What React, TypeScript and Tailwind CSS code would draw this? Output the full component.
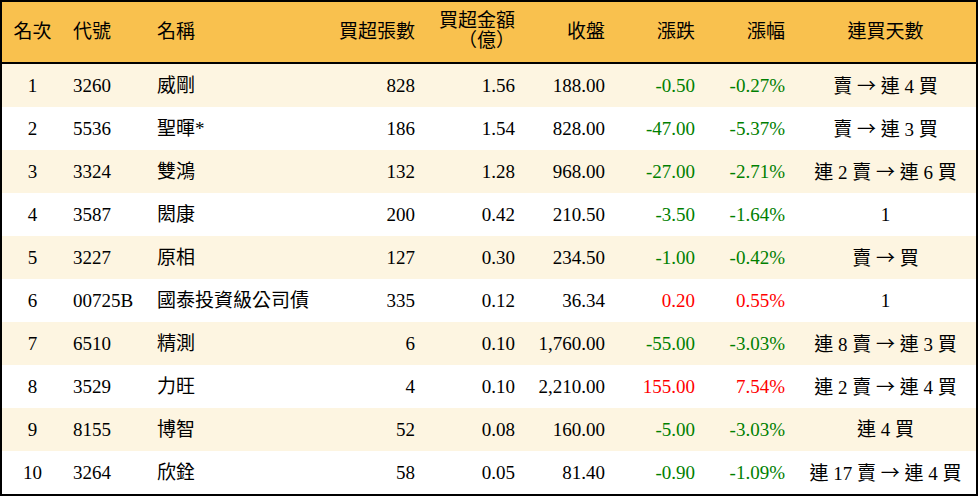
import React from "react";

type Row = {
  rank: number;
  code: string;
  name: string;
  lots: string;
  amount: string;
  close: string;
  change: string;
  pct: string;
  streak: string;
};

const rows: Row[] = [
  { rank: 1, code: "3260", name: "威剛", lots: "828", amount: "1.56", close: "188.00", change: "-0.50", pct: "-0.27%", streak: "賣 → 連 4 買" },
  { rank: 2, code: "5536", name: "聖暉*", lots: "186", amount: "1.54", close: "828.00", change: "-47.00", pct: "-5.37%", streak: "賣 → 連 3 買" },
  { rank: 3, code: "3324", name: "雙鴻", lots: "132", amount: "1.28", close: "968.00", change: "-27.00", pct: "-2.71%", streak: "連 2 賣 → 連 6 買" },
  { rank: 4, code: "3587", name: "閎康", lots: "200", amount: "0.42", close: "210.50", change: "-3.50", pct: "-1.64%", streak: "1" },
  { rank: 5, code: "3227", name: "原相", lots: "127", amount: "0.30", close: "234.50", change: "-1.00", pct: "-0.42%", streak: "賣 → 買" },
  { rank: 6, code: "00725B", name: "國泰投資級公司債", lots: "335", amount: "0.12", close: "36.34", change: "0.20", pct: "0.55%", streak: "1" },
  { rank: 7, code: "6510", name: "精測", lots: "6", amount: "0.10", close: "1,760.00", change: "-55.00", pct: "-3.03%", streak: "連 8 賣 → 連 3 買" },
  { rank: 8, code: "3529", name: "力旺", lots: "4", amount: "0.10", close: "2,210.00", change: "155.00", pct: "7.54%", streak: "連 2 賣 → 連 4 買" },
  { rank: 9, code: "8155", name: "博智", lots: "52", amount: "0.08", close: "160.00", change: "-5.00", pct: "-3.03%", streak: "連 4 買" },
  { rank: 10, code: "3264", name: "欣銓", lots: "58", amount: "0.05", close: "81.40", change: "-0.90", pct: "-1.09%", streak: "連 17 賣 → 連 4 買" },
];

const cols =
  "grid grid-cols-[61px_84px_178px_100px_100px_90px_90px_90px_181px] items-center";

// the arrow is drawn wide in the reference, so take it from the CJK font
function Streak({ text }: { text: string }) {
  const parts = text.split("→");
  return (
    <>
      {parts.map((p, i) => (
        <React.Fragment key={i}>
          {i > 0 && (
            <span style={{ fontFamily: '"Noto Sans CJK TC", sans-serif' }}>→</span>
          )}
          {p}
        </React.Fragment>
      ))}
    </>
  );
}

export default function App() {
  return (
    <div
      className="w-[978px] h-[496px] bg-white text-black text-[19px] leading-[20px]"
      style={{ fontFamily: '"Liberation Serif", "Noto Sans CJK TC", serif' }}
    >
      <div className="border-2 border-black">
        {/* header */}
        <div className={`${cols} h-[62px] bg-[#f9c14e] border-b-2 border-black`}>
          <div className="text-center">名次</div>
          <div className="px-[10px]">代號</div>
          <div className="px-[10px]">名稱</div>
          <div className="px-[10px] text-right">買超張數</div>
          <div className="px-[10px] text-right leading-[20px] pb-[2px]">
            買超金額
            <br />
            （億）
          </div>
          <div className="px-[10px] text-right">收盤</div>
          <div className="px-[10px] text-right">漲跌</div>
          <div className="px-[10px] text-right">漲幅</div>
          <div className="text-center">連買天數</div>
        </div>

        {rows.map((r, i) => {
          const up = !r.change.startsWith("-");
          const tone = up ? "text-[#ff0000]" : "text-[#008000]";
          return (
            <div
              key={r.rank}
              className={`${cols} h-[43px] ${i % 2 === 0 ? "bg-[#fdf5e1]" : "bg-white"}`}
            >
              <div className="text-center">{r.rank}</div>
              <div className="px-[10px]">{r.code}</div>
              <div className="px-[10px] whitespace-nowrap">{r.name}</div>
              <div className="px-[10px] text-right">{r.lots}</div>
              <div className="px-[10px] text-right">{r.amount}</div>
              <div className="px-[10px] text-right">{r.close}</div>
              <div className={`px-[10px] text-right ${tone}`}>{r.change}</div>
              <div className={`px-[10px] text-right ${tone}`}>{r.pct}</div>
              <div className="text-center whitespace-nowrap">
                <Streak text={r.streak} />
              </div>
            </div>
          );
        })}
      </div>
    </div>
  );
}
